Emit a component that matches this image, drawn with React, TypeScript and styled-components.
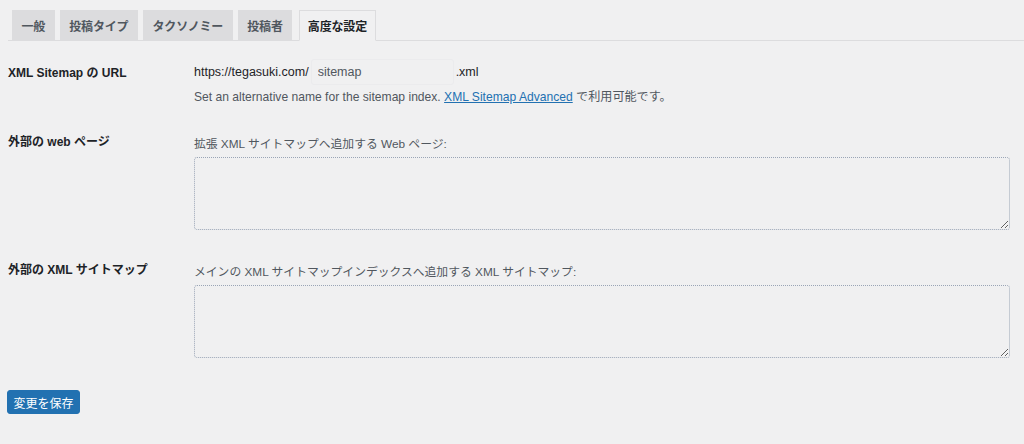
import React from "react";
import styled, { createGlobalStyle } from "styled-components";

const Global = createGlobalStyle`
  html, body { margin: 0; padding: 0; background: #f0f0f1; }
  body {
    font-family: "Liberation Sans", "Noto Sans CJK JP", sans-serif;
    color: #1d2327;
    width: 1024px;
    height: 444px;
    overflow: hidden;
  }
`;

const Page = styled.div`
  padding: 10px 14px 0 8px;
`;

const TabBar = styled.nav`
  display: flex;
  align-items: flex-end;
  gap: 5px;
  padding-left: 4px;
  margin-right: -14px;
  border-bottom: 1px solid #dcdcde;
  height: 30px;
`;

const Tab = styled.a<{ $active?: boolean }>`
  display: flex;
  align-items: center;
  box-sizing: border-box;
  height: ${(p) => (p.$active ? "31px" : "30px")};
  margin-bottom: ${(p) => (p.$active ? "-1px" : "0")};
  margin-left: ${(p) => (p.$active ? "2px" : "0")};
  padding: 0 ${(p) => (p.$active ? "7.5px" : "9.5px")};
  font-size: 12px;
  letter-spacing: -0.15px;
  font-weight: 700;
  color: ${(p) => (p.$active ? "#1d2327" : "#50575e")};
  background: ${(p) => (p.$active ? "#f0f0f1" : "#dcdcde")};
  border: ${(p) => (p.$active ? "1px solid #dcdcde" : "none")};
  border-bottom: ${(p) => (p.$active ? "1px solid #f0f0f1" : "none")};
  text-decoration: none;
  white-space: nowrap;
`;

const Row = styled.div<{ $top: number }>`
  display: grid;
  grid-template-columns: 186px 1fr;
  margin-top: ${(p) => p.$top}px;
`;

const Label = styled.div<{ $pad: number }>`
  font-size: 12px;
  font-weight: 700;
  line-height: 20px;
  padding-top: ${(p) => p.$pad}px;
  color: #1d2327;
`;

const Field = styled.div<{ $pad: number }>`
  display: flex;
  flex-direction: column;
  padding-top: ${(p) => p.$pad}px;
`;

const UrlLine = styled.div`
  display: flex;
  align-items: center;
  gap: 2px;
  height: 26px;
  font-size: 12.5px;
  color: #1d2327;
`;

const NameInput = styled.input`
  box-sizing: border-box;
  width: 143px;
  height: 26px;
  padding: 0 6px;
  border: 1px solid #ebebed;
  border-radius: 3px;
  background: #f0f0f1;
  font-family: inherit;
  font-size: 12.5px;
  color: #50575e;
  outline: none;
`;

const Description = styled.p`
  margin: 2px 0 0;
  font-size: 12.1px;
  line-height: 20px;
  color: #50575e;
`;

const Link = styled.a`
  color: #2271b1;
  text-decoration: underline;
`;

const Hint = styled.div`
  font-size: 11.8px;
  line-height: 20px;
  color: #50575e;
`;

const Area = styled.textarea`
  box-sizing: border-box;
  display: block;
  width: 100%;
  height: 73px;
  margin-top: 3px;
  border: 1px dotted #9aa5b6;
  border-radius: 3px;
  background: transparent;
  font-family: inherit;
  font-size: 12.5px;
  outline: none;
`;

const SaveButton = styled.button`
  display: block;
  margin-top: 32px;
  margin-left: -1px;
  box-sizing: border-box;
  height: 24px;
  width: 73px;
  padding: 0;
  border: 1px solid #2271b1;
  border-radius: 3px;
  background: #2271b1;
  color: #fff;
  font-family: inherit;
  font-size: 12px;
  cursor: pointer;
`;

export default function App() {
  return (
    <>
      <Global />
      <Page>
        <TabBar>
          <Tab>一般</Tab>
          <Tab>投稿タイプ</Tab>
          <Tab>タクソノミー</Tab>
          <Tab>投稿者</Tab>
          <Tab $active>高度な設定</Tab>
        </TabBar>

        <Row $top={18}>
          <Label $pad={4}>XML Sitemap の URL</Label>
          <Field $pad={0}>
            <UrlLine>
              <span>https://tegasuki.com/</span>
              <NameInput defaultValue="sitemap" />
              <span>.xml</span>
            </UrlLine>
            <Description>
              Set an alternative name for the sitemap index.{" "}
              <Link href="#">XML Sitemap Advanced</Link> で利用可能です。
            </Description>
          </Field>
        </Row>

        <Row $top={25}>
          <Label $pad={0}>外部の web ページ</Label>
          <Field $pad={2}>
            <Hint>拡張 XML サイトマップへ追加する Web ページ:</Hint>
            <Area />
          </Field>
        </Row>

        <Row $top={30}>
          <Label $pad={0}>外部の XML サイトマップ</Label>
          <Field $pad={2}>
            <Hint>メインの XML サイトマップインデックスへ追加する XML サイトマップ:</Hint>
            <Area />
          </Field>
        </Row>

        <SaveButton>変更を保存</SaveButton>
      </Page>
    </>
  );
}
